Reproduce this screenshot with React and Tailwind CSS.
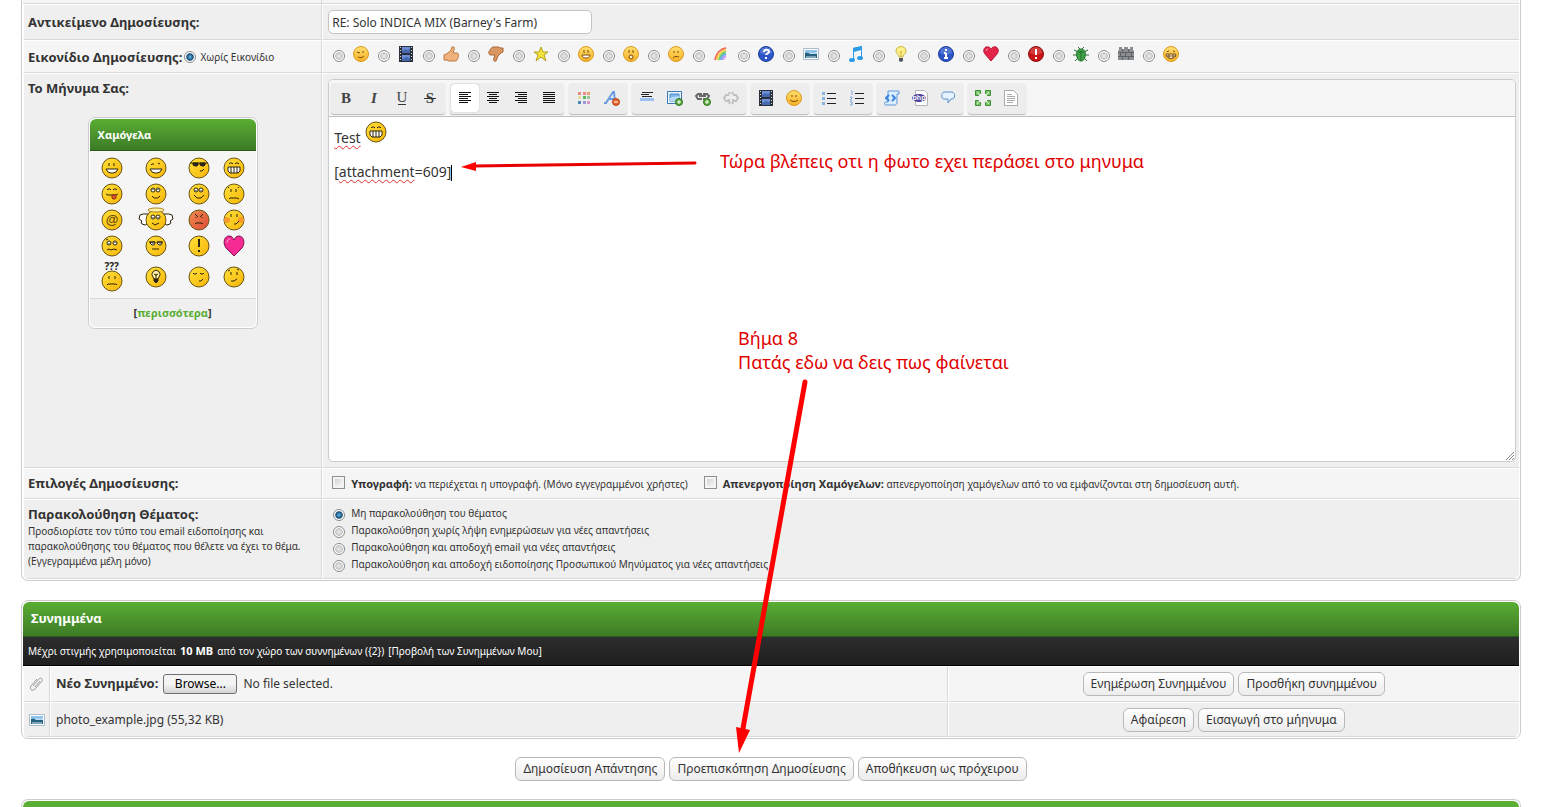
import { useState } from 'react';

const CELL = 'border-t border-l border-t-white border-l-white border-b border-r border-b-[#d9d9d9] border-r-[#d9d9d9]';
const LAST_CELL = 'border-t border-l border-t-white border-l-white border-b border-b-[#d9d9d9]';
const SMALL = 'text-[10px]';

/* ---------- pixel smilies ---------- */

const EYES = 'M8 6v3M13 6v3';
const CLOSED = 'M6 7l1-1h2l1 1M12 7l1-1h2l1 1';

const FACES = {
  smile: (
    <>
      <path d={EYES} />
      <path d="M5 12h12l-2 3-3 1h-2l-3-1z" fill="#fff" />
    </>
  ),
  wink: (
    <>
      <path d="M6 8l1-1h2M13 6l2 1" />
      <path d="M5 12h12l-2 3-3 1h-2l-3-1z" fill="#fff" />
    </>
  ),
  cool: (
    <>
      <path d="M2 6h18" />
      <path d="M5 6h5v2l-1 1H7L5 8zM12 6h5v2l-1 1h-2l-2-1z" fill="#222" />
      <path d="M12 14h2l2-2" />
    </>
  ),
  biggrin: (
    <>
      <path d={CLOSED} />
      <path d="M5 10h12v4l-2 2H7l-2-2z" fill="#fff" />
      <path d="M8 10v6M11 10v6M14 10v6" />
    </>
  ),
  tongue: (
    <>
      <path d={CLOSED} />
      <path d="M5 11l2 1h8l2-1" />
      <path d="M11 12h4v3l-1 1h-2l-1-1z" fill="#e2562a" stroke="#8b2c12" />
    </>
  ),
  rolleyes: (
    <>
      <ellipse cx="8" cy="7" rx="2" ry="2" fill="#fff" />
      <ellipse cx="13" cy="7" rx="2" ry="2" fill="#fff" />
      <path d="M8 6v1M13 6v1M7 13l2 2h4l2-2" />
    </>
  ),
  shy: (
    <>
      <ellipse cx="8" cy="7" rx="2" ry="2" fill="#fff" />
      <ellipse cx="13" cy="7" rx="2" ry="2" fill="#fff" />
      <path d="M8 7v1M13 7v1M6 12l3 3h4l3-3" />
    </>
  ),
  sad: <path d="M8 6v3M13 6v3M5 5l1-1M15 4l1 1M6 16l1-1h7l2 1" />,
  at: (
    <text x="11" y="15" textAnchor="middle" fontSize="13" fontWeight="bold" stroke="none" fill="#6a4a08" fontFamily="Liberation Sans, sans-serif">@</text>
  ),
  angel: (
    <>
      <ellipse cx="8" cy="8" rx="2" ry="2" fill="#fff" />
      <ellipse cx="13" cy="8" rx="2" ry="2" fill="#fff" />
      <path d="M8 8v1M13 8v1M7 14l3 2 4-2" />
    </>
  ),
  angry: <path d="M7 5l3 3M15 5l-3 3M8 8v1M14 8v1M7 15l1-1h6l1 1" />,
  blush: (
    <>
      <circle cx="4" cy="11" r="3" fill="#f79a2c" stroke="none" />
      <circle cx="18" cy="11" r="3" fill="#f79a2c" stroke="none" />
      <path d="M8 5v3M14 5v3M11 15h2l3-3" />
    </>
  ),
  confused: (
    <>
      <ellipse cx="8" cy="8" rx="2" ry="2" fill="#fff" />
      <ellipse cx="14" cy="8" rx="2" ry="2" fill="#fff" />
      <path d="M8 8v1M14 7v1M6 15l2-1 2 1 3-1 3 1M5 5l2-1" />
    </>
  ),
  dodgy: (
    <>
      <path d="M5 7h5v1l-1 2H7L5 8zM12 7h5v1l-1 2h-2l-2-2z" fill="#fff" />
      <path d="M4 7h6M12 7h6M8 8v1M15 8v1M7 14h7" />
    </>
  ),
  exclamation: <path d="M11 4v8M11 15v2" strokeWidth="2" />,
  question: <path d="M8 6v3M14 6v3M6 15l1-1h8l1 1" />,
  lightbulb: (
    <>
      <path d="M8 11a4 4 0 1 1 6 0l-1 2H9z" fill="#fff2a8" />
      <path d="M11 8v4M9 8l2 1 2-1" />
      <path d="M9 13h4v2l-2 2-2-2z" fill="#222" />
    </>
  ),
  sleepy: <path d="M5 7l1 1h2l1-1M12 7l1 1h2l1-1M11 15h2l2-2" />,
  undecided: <path d="M8 6v3M14 6v3M5 5l2-1M14 3l2 1M8 15h3l3-2" />,
};

function Smiley({ kind }) {
  if (kind === 'heart') {
    return (
      <svg width="22" height="22" viewBox="0 0 22 22">
        <path d="M11 21L3 13C-1 7 2 1 6 1c3 0 4 2 5 4 1-2 2-4 5-4 4 0 7 6 3 12z" fill="#f52a92" stroke="#7a1450" />
        <path d="M4 8c0-3 1-4 3-4" stroke="#ff9fd0" fill="none" />
      </svg>
    );
  }
  const tone = kind === 'angry' ? ['#f08c50', '#dd4a35'] : ['#ffe23c', '#f7b408'];
  return (
    <svg width="22" height="22" viewBox="0 0 22 22" fill="none" stroke="#2c2408" strokeWidth="1" overflow="visible">
      <defs>
        <linearGradient id={`g-${kind}`} x1="0" y1="0" x2="1" y2="1">
          <stop offset="0" stopColor={tone[0]} />
          <stop offset="1" stopColor={tone[1]} />
        </linearGradient>
      </defs>
      {kind === 'angel' && (
        <path d="M2 15l-2 1-3-1-1-2 1-1-3-2 1-4 3-1h5zM20 15l2 1 3-1 1-2-1-1 3-2-1-4-3-1h-5z" fill="#fff" />
      )}
      <circle cx="11" cy="11" r="10" fill={`url(#g-${kind})`} stroke="#6b5410" />
      {kind === 'angel' && <ellipse cx="11" cy="1" rx="8" ry="2" fill="#fff2a8" stroke="#a88418" />}
      {FACES[kind]}
    </svg>
  );
}

/* ---------- 16px post icons ---------- */

function MiniFace({ children }) {
  return (
    <g fill="none" stroke="#7a4a08" strokeWidth="1">
      <circle cx="8" cy="8" r="7.5" fill="url(#mini-face)" stroke="#dc9a20" />
      {children}
    </g>
  );
}

const Film = (
  <g>
    <path d="M1 0h14v16H1z" fill="#2a2f3a" />
    <path d="M4 1h8v6H4zM4 9h8v6H4z" fill="#6d8fd6" />
    <path d="M4 5l3-2 2 1 3-1v4H4zM4 13l4-2 4 1v3H4z" fill="#4668b0" />
    <path d="M2.500 1v15M13.500 1v15" stroke="#d5dae4" strokeDasharray="1 2" />
  </g>
);

const Picture = (
  <g>
    <path d="M.5 2.500h15v11H.5z" fill="#fff" stroke="#a9bccb" />
    <path d="M2 4h12v8H2z" fill="#8cc4ee" />
    <path d="M2 7c4-1 6 1 12 1v4H2z" fill="#23617f" />
    <path d="M6 7c3 1 5 0 8 0M3 11h10" stroke="#d6ecfb" fill="none" />
  </g>
);

const Disc = ({ color, edge, children }) => (
  <g>
    <circle cx="8" cy="8" r="7.5" fill={color} stroke={edge} />
    <path d="M2 7a6 6 0 0 1 12 0c-4 2-8 2-12 0z" fill="#fff" opacity=".18" />
    {children}
  </g>
);

const POST_ICONS = {
  wink: <MiniFace><path d="M4 6l3 1M10 5v2M5 11c2 1 4 1 6-1" /></MiniFace>,
  video: Film,
  thumbsup: (
    <path d="M1 9l4-2 3-3 1-3c2-1 3 1 2 3l-1 3h4c1 0 2 1 1 2 1 1 1 2 0 2 0 1 0 2-1 2 0 1 0 2-2 2H6l-2-1H1z" fill="#f0b27c" stroke="#bd7840" />
  ),
  thumbsdown: (
    <path d="M15 6l-2 1-3 3-2 5c-2 1-3-1-2-3l1-3H3c-2 0-2-1-2-2-1-1 0-2 1-2 0-1 0-2 1-2 0-1 1-2 2-2h6l1 1h3z" fill="#d99660" stroke="#a8683a" />
  ),
  star: <path d="M8 1l2 5h5l-4 3 2 6-5-4-5 4 2-6-4-3h5z" fill="#f2e23a" stroke="#b4a11a" />,
  grin: <MiniFace><path d="M6 4v3M10 4v3" /><path d="M4 9h8c0 4-8 4-8 0z" fill="#fff" /></MiniFace>,
  shocked: <MiniFace><path d="M6 4v3M10 4v3" /><ellipse cx="8" cy="11" rx="2" ry="2" fill="#fbe9c0" /></MiniFace>,
  sad: <MiniFace><path d="M6 5v2M10 5v2M5 12c2-2 4-2 6-1" /></MiniFace>,
  rainbow: (
    <g fill="none" strokeWidth="2">
      <path d="M2 14C3 8 7 3 13 2" stroke="#f26a5a" />
      <path d="M4 14C5 9 8 5 13 4" stroke="#f7d14a" />
      <path d="M6 14c1-4 3-7 7-8" stroke="#6fcf6a" />
      <path d="M8 14c0-3 2-5 5-6" stroke="#66a8f0" />
      <path d="M10 14c0-2 1-3 3-4" stroke="#c9a0ee" />
    </g>
  ),
  question: (
    <Disc color="#2c56c8" edge="#1c3c9c">
      <path d="M6 6c0-3 5-3 5 0 0 1-3 2-3 3M8 11v2" stroke="#fff" strokeWidth="2" fill="none" />
    </Disc>
  ),
  photo: Picture,
  music: (
    <g fill="#2c9be6">
      <path d="M5 2l9-2v12h-1V4L6 6v8H5z" />
      <ellipse cx="4" cy="14" rx="3" ry="2" />
      <ellipse cx="12" cy="12" rx="3" ry="2" />
      <path d="M5 2l9-2v3L5 5z" />
    </g>
  ),
  lightbulb: (
    <g>
      <path d="M6 11C6 8 3 8 3 5c0-6 10-6 10 0 0 3-3 3-3 6z" fill="#fbf08a" stroke="#c9b440" />
      <path d="M6 12h4v3l-2 1-2-1z" fill="#55585c" />
      <path d="M7 5l1 2 1-2M8 7v4" stroke="#d2b83a" fill="none" />
    </g>
  ),
  information: (
    <Disc color="#2c56c8" edge="#1c3c9c">
      <path d="M8 3v2M8 7v5M6 7h2M6 12h4" stroke="#fff" strokeWidth="2" fill="none" />
    </Disc>
  ),
  heart: (
    <g>
      <path d="M8 15L2 8C-1 4 2 0 5 1c2 0 2 1 3 2 1-1 1-2 3-2 3-1 6 3 3 7z" fill="#e22548" stroke="#b81634" />
      <path d="M3 5c0-2 1-2 2-2" stroke="#ff9cae" fill="none" />
    </g>
  ),
  exclamation: (
    <Disc color="#c81414" edge="#950d0d">
      <path d="M8 3v6M8 11v2" stroke="#fff" strokeWidth="2" fill="none" />
    </Disc>
  ),
  bug: (
    <g stroke="#24702c" fill="none">
      <path d="M1 4l4 2M15 4l-4 2M0 9h4M16 9h-4M2 15l3-3M14 15l-3-3M5 1l2 2M11 1L9 3" />
      <path d="M8 3c4 0 5 4 4 8-1 3-2 4-4 4s-3-1-4-4C3 7 4 3 8 3z" fill="#3fa348" />
      <path d="M8 5v10M5 6h6" />
    </g>
  ),
  brick: (
    <g>
      <path d="M1 1h3v2h2V1h4v2h2V1h3v3l1 1v9H0V5l1-1z" fill="#8b8e90" />
      <path d="M0 6.500h16M0 10.500h16M4.500 3v3M10.500 3v3M7.500 7v3M13.500 7v3M2.500 7v3M4.500 11v3M10.500 11v3" stroke="#5e6264" />
    </g>
  ),
  biggrin: (
    <MiniFace>
      <path d="M4 6l1-1h1M10 5h1l1 1" />
      <path d="M3 8h10c0 6-10 6-10 0z" fill="#fff" />
      <path d="M3 10h10M6 8v4M10 8v4" />
    </MiniFace>
  ),
};

function PostIcon({ name }) {
  return <svg className="mb-1" width="16" height="16" viewBox="0 0 16 16">{POST_ICONS[name]}</svg>;
}

/* ---------- editor toolbar ---------- */

const textLines = (rows) => (
  <path d={rows.map(([x, w], i) => `M${x} ${2.5 + i * 2}h${w}`).join('')} stroke="#111" />
);

const Letter = ({ children, ...rest }) => (
  <text x="8" y="13" textAnchor="middle" fontFamily="Liberation Serif, serif" fontSize="15" fill="#444" {...rest}>{children}</text>
);

const Plus = (
  <g>
    <circle cx="12" cy="12" r="3.5" fill="#58a83c" stroke="#357a20" />
    <path d="M12 10v4M10 12h4" stroke="#fff" />
  </g>
);

const TOOLS = {
  bold: <Letter fontWeight="bold">B</Letter>,
  italic: <Letter fontWeight="bold" fontStyle="italic">I</Letter>,
  underline: <g><Letter y="12">U</Letter><path d="M4 14.500h8" stroke="#333" /></g>,
  strike: <g><Letter fontWeight="bold">S</Letter><path d="M2 8.500h12" stroke="#333" /></g>,
  left: textLines([[2, 12], [2, 9], [2, 12], [2, 9], [2, 12], [2, 9]]),
  center: textLines([[2, 12], [4, 8], [2, 12], [4, 8], [2, 12], [4, 8]]),
  right: textLines([[2, 12], [5, 9], [2, 12], [5, 9], [2, 12], [5, 9]]),
  justify: textLines([[2, 12], [2, 12], [2, 12], [2, 12], [2, 12], [2, 12]]),
  color: (
    <g>
      <path d="M2 2h3v3H2zM7 2h3v3H7z" fill="#e88a86" />
      <path d="M11 2h3v3h-3z" fill="#f0a070" />
      <path d="M2 6h3v3H2z" fill="#e7dca0" />
      <path d="M7 6h3v3H7z" fill="#58b860" />
      <path d="M11 6h3v3h-3z" fill="#9cc8a0" />
      <path d="M2 11h3v3H2z" fill="#4a88b8" />
      <path d="M7 11h3v3H7z" fill="#9a9ad8" />
      <path d="M11 11h3v3h-3z" fill="#d498c8" />
    </g>
  ),
  removeformat: (
    <g>
      <path d="M0 13h3M2 13L9 2h1l1 10M5 9h6" stroke="#6a9be0" strokeWidth="2" fill="none" />
      <circle cx="12" cy="12" r="3.5" fill="#e8622c" stroke="#b8431a" />
      <path d="M10 12h4" stroke="#fff" />
    </g>
  ),
  rule: (
    <g>
      <path d="M3 2.500h11M2 4.500h8M3 6.500h10" stroke="#222" />
      <path d="M1 8h14v3H1z" fill="#9cc0f0" />
    </g>
  ),
  image: (
    <g>
      <path d="M.5 1.500h14v12H.5z" fill="#eef5fc" stroke="#3a78b8" />
      <path d="M3 4h9v7H3z" fill="#7fb8ec" stroke="#4a88c8" />
      <path d="M3 8c3-2 6-1 9-2v5H3z" fill="#b8dcf8" />
      {Plus}
    </g>
  ),
  link: (
    <g>
      <path d="M7 4H3L1 6l2 3h4M8 4h4l2 2-2 3H8M4 6h7" fill="none" stroke="#666" strokeWidth="2" />
      {Plus}
    </g>
  ),
  unlink: <path d="M6 5H3L1 8l2 3h3V9M10 5h3l2 3-2 3h-3V9M6 2l1 2M10 2L9 4M6 14l1-2M10 14l-1-2" fill="none" stroke="#c0c0c0" strokeWidth="2" />,
  video: Film,
  smiley: <MiniFace><path d="M6 5v2M10 5v2M4 10c2 2 6 2 8 0" /></MiniFace>,
  bullets: (
    <g>
      <path d="M1 2h3v3H1zM1 7h3v3H1zM1 12h3v3H1z" fill="#8ab4e0" />
      <path d="M6 3.500h9M6 8.500h9M6 13.500h9" stroke="#222" />
    </g>
  ),
  numbers: (
    <g>
      <path d="M2 1h1v4M1 7h2v1L1 10h2M1 12h2v3H1M2 13h1" stroke="#78a8dc" fill="none" />
      <path d="M6 3.500h9M6 8.500h9M6 13.500h9" stroke="#222" />
    </g>
  ),
  code: (
    <g>
      <path d="M4 1h11v3h-2v8c0 2-1 3-2 3H2c-2 0-2-3 0-3h2z" fill="#dbeeff" stroke="#5a98dc" />
      <path d="M5 5L2 8l3 3M8 5l3 3-3 3" stroke="#3c82d8" strokeWidth="2" fill="none" />
    </g>
  ),
  php: (
    <g>
      <path d="M3.500.5h9l3 3v12h-12z" fill="#fff" stroke="#b4b4b4" />
      <ellipse cx="7" cy="8" rx="7" ry="4" fill="#4a3f98" />
      <text x="7" y="10" textAnchor="middle" fontSize="7" fontWeight="bold" fontFamily="Liberation Sans, sans-serif" fill="#fff">php</text>
    </g>
  ),
  quote: <path d="M4 2h8c4 1 3 7 0 7h-1l-3 4V9H4C1 9 1 3 4 2z" fill="#e6f2ff" stroke="#5a90c8" />,
  maximize: (
    <g fill="#7cc46c" stroke="#3e8e34">
      <path d="M.5.5h5v3l-2 2h-3zM10.500.5h5v5h-3l-2-2zM.5 10.500h3l2 2v3h-5zM12.500 10.500h3v5h-5v-3z" />
      <path d="M2 2l3 3M14 2l-3 3M2 14l3-3M14 14l-3-3" stroke="#dff2da" />
    </g>
  ),
  source: (
    <g>
      <path d="M1.500.5h9l4 4v11h-13z" fill="#fff" stroke="#aaa" />
      <path d="M4 4.500h5M4 6.500h8M4 8.500h8M4 10.500h8M4 12.500h6" stroke="#aaa" />
    </g>
  ),
};

const TOOL_GROUPS = [
  ['bold', 'italic', 'underline', 'strike'],
  ['left', 'center', 'right', 'justify'],
  ['color', 'removeformat'],
  ['rule', 'image', 'link', 'unlink'],
  ['video', 'smiley'],
  ['bullets', 'numbers'],
  ['code', 'php', 'quote'],
  ['maximize', 'source'],
];

function Toolbar() {
  return (
    <div className="flex flex-wrap gap-[5px] rounded-t-[4px] border-b border-[#c0c0c0] bg-[#f6f6f6] px-0.5 pt-[3px] pb-0.5">
      {TOOL_GROUPS.map((group) => (
        <div key={group[0]} className="flex rounded-[3px] bg-[#ededed] px-px pt-px pb-0.5 shadow-[0_1px_1px_#bbb]">
          {group.map((tool) => (
            <button
              key={tool}
              type="button"
              aria-label={tool}
              className={`flex h-7 w-7 items-center justify-center rounded-[3px] ${tool === 'left' ? 'bg-white shadow-[0_0_1px_#888]' : ''}`}
            >
              <svg width="16" height="16" viewBox="0 0 16 16">{TOOLS[tool]}</svg>
            </button>
          ))}
        </div>
      ))}
    </div>
  );
}

/* ---------- form bits ---------- */

function Radio({ className = '', ...props }) {
  return (
    <input
      type="radio"
      className={`h-3 w-3 shrink-0 appearance-none rounded-full border border-[#8a8a8a] bg-[radial-gradient(circle_closest-side,#ececec_0,#c6c6c6_70%,#fff_85%)] checked:bg-[radial-gradient(circle_closest-side,#5cc4f0_0,#16466e_65%,#fff_85%)] ${className}`}
      {...props}
    />
  );
}

function Checkbox(props) {
  return (
    <input
      type="checkbox"
      className="h-[13px] w-[13px] shrink-0 appearance-none border border-[#8e8f8f] bg-linear-to-br from-[#c8ccd0] to-white shadow-[inset_0_0_0_2px_#f4f4f4] checked:bg-[#3a78b8]"
      {...props}
    />
  );
}

function ActionButton({ children }) {
  return (
    <button
      type="button"
      className="h-6 rounded-md border border-[#b8b8b8] bg-linear-to-b from-white to-[#ececec] px-[7px] text-xs text-[#333]"
    >
      {children}
    </button>
  );
}

function Panel({ children, className = '' }) {
  return (
    <div className={`rounded-[7px] border border-[#ccc] bg-white p-px ${className}`}>
      <div className="overflow-hidden rounded-[6px]">{children}</div>
    </div>
  );
}

const SMILEY_ROWS = [
  ['smile', 'wink', 'cool', 'biggrin'],
  ['tongue', 'rolleyes', 'shy', 'sad'],
  ['at', 'angel', 'angry', 'blush'],
  ['confused', 'dodgy', 'exclamation', 'heart'],
  ['question', 'lightbulb', 'sleepy', 'undecided'],
];

function SmileyBox() {
  return (
    <Panel className="mx-auto mt-[19px] w-[170px]">
      <h2 className="flex h-8 items-center border-b border-[#2a5a1c] bg-linear-to-b from-[#5aae34] to-[#3d7b26] px-2 text-[11px] font-bold text-white">
        Χαμόγελα
      </h2>
      <div className="grid grid-cols-[44px_44px_42px_28px] grid-rows-[26px_26px_26px_26px_36px] bg-[#f5f5f5] pt-1 pb-[3px]">
        {SMILEY_ROWS.flat().map((kind) => (
          <button key={kind} type="button" aria-label={kind} className="flex flex-col items-center justify-center">
            {kind === 'question' && <span className="h-2 text-[10px] leading-[8px] font-bold text-[#222]">???</span>}
            <Smiley kind={kind} />
          </button>
        ))}
      </div>
      <div className="border-t border-[#d9d9d9] bg-[#efefef] py-1.5 text-center text-[11px] leading-4 font-bold">
        [<a href="#more" className="text-[#5aae34]">περισσότερα</a>]
      </div>
    </Panel>
  );
}

const SUBSCRIPTIONS = [
  'Μη παρακολούθηση του θέματος',
  'Παρακολούθηση χωρίς λήψη ενημερώσεων για νέες απαντήσεις',
  'Παρακολούθηση και αποδοχή email για νέες απαντήσεις',
  'Παρακολούθηση και αποδοχή ειδοποίησης Προσωπικού Μηνύματος για νέες απαντήσεις',
];

function PostForm() {
  const [subject, setSubject] = useState("RE: Solo INDICA MIX (Barney's Farm)");

  return (
    <div className="rounded-b-[7px] border border-t-0 border-[#ccc] bg-white p-px pt-0">
      <div className="grid grid-cols-[minmax(0,1fr)_minmax(0,4fr)] overflow-hidden rounded-b-[6px] text-[13px] leading-5">
        <div className="h-1 border-r border-b border-[#d9d9d9] bg-[#f5f5f5]" />
        <div className="h-1 border-b border-[#d9d9d9] bg-[#f5f5f5]" />

        <div className={`${CELL} flex items-center bg-[#efefef] px-1`}>
          <label htmlFor="subject" className="font-bold">Αντικείμενο Δημοσίευσης:</label>
        </div>
        <div className={`${LAST_CELL} bg-[#efefef] p-[5px]`}>
          <input
            id="subject"
            value={subject}
            onChange={(e) => setSubject(e.target.value)}
            className="block h-6 w-66 rounded-[5px] border border-[#c4c4c4] bg-white px-[3px] text-xs"
          />
        </div>

        <div className={`${CELL} flex items-center bg-[#f5f5f5] px-1`}>
          <span className="font-bold">Εικονίδιο Δημοσίευσης:</span>
          <label className={`ml-0.5 flex items-center gap-1 ${SMALL}`}>
            <Radio name="icon" defaultChecked />
            Χωρίς Εικονίδιο
          </label>
        </div>
        <div className={`${LAST_CELL} flex h-[33px] items-center bg-[#f5f5f5] px-2.5 pb-0.5`}>
          {Object.keys(POST_ICONS).map((name) => (
            <label key={name} className="flex w-[45px] items-center gap-2">
              <Radio name="icon" value={name} aria-label={name} />
              <PostIcon name={name} />
            </label>
          ))}
        </div>

        <div className={`${CELL} bg-[#efefef] px-1 pt-1`}>
          <div id="message-label" className="font-bold">Το Μήνυμα Σας:</div>
          <SmileyBox />
        </div>
        <div className={`${LAST_CELL} bg-[#efefef] py-[5px] pr-[3px] pl-[5px]`}>
          <div className="rounded-[5px] border border-[#ccc] bg-white">
            <Toolbar />
            <div
              role="textbox"
              aria-labelledby="message-label"
              contentEditable
              suppressContentEditableWarning
              spellCheck={false}
              className="relative min-h-[344px] px-[5px] pt-1 text-sm leading-6 outline-none"
            >
              <p className="flex items-start pb-1">
                <span className="mt-[5px] mr-1 underline decoration-[#e03030] decoration-wavy decoration-1 underline-offset-2">Test</span>
                <Smiley kind="biggrin" />
              </p>
              <p className="pt-1.5">
                [<span className="underline decoration-[#e03030] decoration-wavy decoration-1 underline-offset-2">attachment</span>=609]
                <span className="inline-block h-4 w-px bg-black align-middle" />
              </p>
              <svg className="absolute right-0 bottom-0" width="10" height="10" viewBox="0 0 10 10">
                <path d="M1 9l8-8M4 9l5-5M7 9l2-2" stroke="#888" />
              </svg>
            </div>
          </div>
        </div>

        <div className={`${CELL} flex items-center bg-[#f5f5f5] px-1 pb-0.5 font-bold`}>Επιλογές Δημοσίευσης:</div>
        <div className={`${LAST_CELL} flex h-[31px] items-center gap-4 bg-[#f5f5f5] px-[9px] ${SMALL}`}>
          <label className="flex items-start gap-1.5">
            <Checkbox />
            <span className="leading-4"><b className="text-[11px]">Υπογραφή:</b> να περιέχεται η υπογραφή. (Μόνο εγγεγραμμένοι χρήστες)</span>
          </label>
          <label className="flex items-start gap-1.5">
            <Checkbox />
            <span className="leading-4"><b className="text-[11px]">Απενεργοποίηση Χαμόγελων:</b> απενεργοποίηση χαμόγελων από το να εμφανίζονται στη δημοσίευση αυτή.</span>
          </label>
        </div>

        <div className={`${CELL} bg-[#efefef] px-1 pt-1`}>
          <div className="font-bold">Παρακολούθηση Θέματος:</div>
          <p className={`leading-[15px] ${SMALL}`}>
            Προσδιορίστε τον τύπο του email ειδοποίησης και<br />
            παρακολούθησης του θέματος που θέλετε να έχει το θέμα.<br />
            (Εγγεγραμμένα μέλη μόνο)
          </p>
        </div>
        <div className={`${LAST_CELL} bg-[#efefef] px-2.5 pt-[5px] pb-[5px]`}>
          {SUBSCRIPTIONS.map((text, i) => (
            <label key={text} className={`flex w-fit items-start gap-1.5 leading-[17px] ${SMALL}`}>
              <Radio name="subscription" defaultChecked={i === 0} className="mt-1" />
              {text}
            </label>
          ))}
        </div>
      </div>
    </div>
  );
}

function Attachments() {
  return (
    <Panel className="mt-[19px]">
      <h2 className="flex h-[35px] items-center border-b border-[#2a5a1c] bg-linear-to-b from-[#5aae34] to-[#3d7b26] px-2 text-[13px] font-bold text-white">
        Συνημμένα
      </h2>
      <p className={`flex h-[29px] items-center gap-1 border-b border-black bg-linear-to-b from-[#2d2d2d] to-[#1f1f1f] px-[5px] text-white ${SMALL}`}>
        Μέχρι στιγμής χρησιμοποιείται <b className="text-[11px]">10 MB</b> από τον χώρο των συννημένων ({'{2}'})
        <a href="#attachments">[Προβολή των Συνημμένων Μου]</a>
      </p>
      <table className="w-full table-fixed border-separate border-spacing-0 text-xs">
        <colgroup>
          <col className="w-[27px]" />
          <col className="w-[60%]" />
          <col />
        </colgroup>
        <tbody>
          <tr className="h-9 bg-[#f5f5f5]">
            <td className={CELL}>
              <svg className="mx-auto" width="16" height="16" viewBox="0 0 16 16" fill="none" stroke="#9a9a9a">
                <path d="M4 10l6-7c2-2 4 0 3 2l-7 8c-3 3-6 0-4-3l6-7M6 11l5-6" />
              </svg>
            </td>
            <td className={`${CELL} px-[5px]`}>
              <div className="flex items-center">
                <label htmlFor="attachment" className="text-[13px] font-bold">Νέο Συνημμένο:</label>
                <button type="button" className="ml-[5px] h-5 w-[74px] rounded-[3px] border border-[#707070] bg-linear-to-b from-[#f4f4f4] from-50% to-[#d4d4d4] text-xs text-black">
                  Browse...
                </button>
                <input id="attachment" type="file" className="hidden" />
                <span className="ml-1.5">No file selected.</span>
              </div>
            </td>
            <td className={LAST_CELL}>
              <div className="flex justify-center gap-1">
                <ActionButton>Ενημέρωση Συνημμένου</ActionButton>
                <ActionButton>Προσθήκη συνημμένου</ActionButton>
              </div>
            </td>
          </tr>
          <tr className="h-[35px] bg-[#efefef]">
            <td className={CELL}>
              <svg className="mx-auto" width="16" height="16" viewBox="0 0 16 16">{Picture}</svg>
            </td>
            <td className={`${CELL} px-[5px]`}>photo_example.jpg (55,32 KB)</td>
            <td className={LAST_CELL}>
              <div className="flex justify-center gap-1">
                <ActionButton>Αφαίρεση</ActionButton>
                <ActionButton>Εισαγωγή στο μήηνυμα</ActionButton>
              </div>
            </td>
          </tr>
        </tbody>
      </table>
    </Panel>
  );
}

/* Hand-drawn notes that sit on top of the form */
function Notes() {
  return (
    <div className="pointer-events-none text-lg leading-6 text-[#e00000]">
      <p className="absolute top-[149px] left-[720px] whitespace-nowrap">Τώρα βλέπεις οτι η φωτο εχει περάσει στο μηνυμα</p>
      <svg className="absolute top-[157px] left-[460px]" width="240" height="18" viewBox="0 0 240 18">
        <path d="M14 9L235 6" stroke="#e80000" strokeWidth="3" strokeLinecap="round" />
        <path d="M1 10l15-5v9z" fill="red" />
      </svg>
      <p className="absolute top-[326px] left-[738px] whitespace-nowrap">
        Βήμα 8<br />
        Πατάς εδω να δεις πως φαίνεται
      </p>
      <svg className="absolute top-[376px] left-[730px]" width="84" height="380" viewBox="0 0 84 380">
        <path d="M75 6L12 358" stroke="red" strokeWidth="5" strokeLinecap="round" />
        <path d="M9 377L6 351l14 3z" fill="red" />
      </svg>
    </div>
  );
}

export default function App() {
  return (
    <div className="relative bg-white pr-9 pl-[21px] font-['Noto_Sans',sans-serif] text-[#333]">
      <svg className="absolute" width="0" height="0">
        <defs>
          <linearGradient id="mini-face" x1="0" y1="0" x2="0" y2="1">
            <stop offset="0" stopColor="#ffe070" />
            <stop offset="1" stopColor="#f6b024" />
          </linearGradient>
        </defs>
      </svg>
      <PostForm />
      <Attachments />
      <div className="mt-[18px] flex justify-center gap-1">
        <ActionButton>Δημοσίευση Απάντησης</ActionButton>
        <ActionButton>Προεπισκόπηση Δημοσίευσης</ActionButton>
        <ActionButton>Αποθήκευση ως πρόχειρου</ActionButton>
      </div>
      <div className="mt-[18px] rounded-t-[7px] border border-b-0 border-[#ccc] p-px pb-0">
        <div className="h-1.5 rounded-t-[6px] bg-[#5aae34]" />
      </div>
      <Notes />
    </div>
  );
}
